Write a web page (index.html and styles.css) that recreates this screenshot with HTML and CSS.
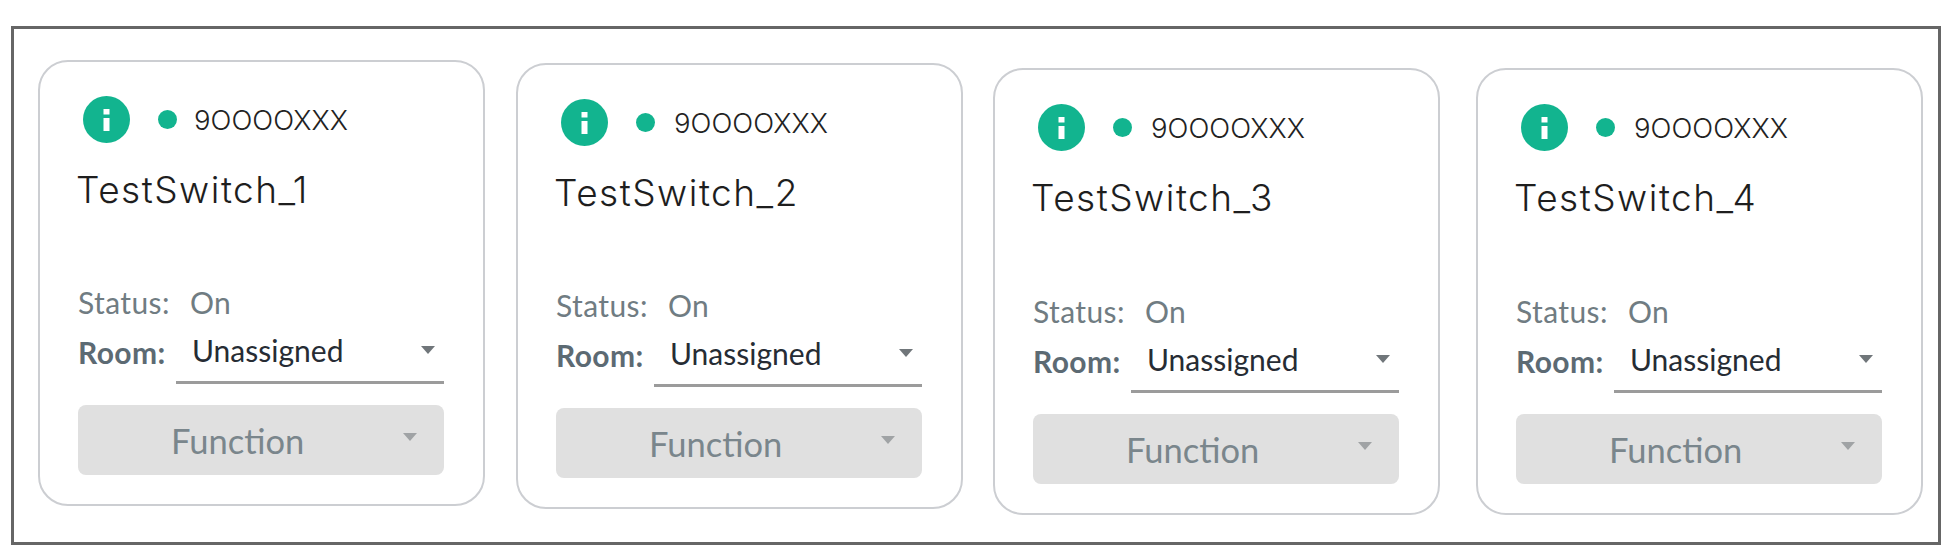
FILE: index.html
```html
<!DOCTYPE html>
<html>
  <head>
    <title>Switches</title>
    <link rel="stylesheet" href="styles.css">
  </head>
  <body>
    <div class="frame">
      <!-- switch 1 -->
      <div class="card card_1">
        <div class="card_top">
          <svg class="info_icon" viewBox="0 0 47 47"><circle cx="23.5" cy="23.5" r="23.5" fill="#12b48f"/><rect x="20.5" y="13" width="6" height="5.5" fill="#fff"/><rect x="20.5" y="22" width="6" height="13" fill="#fff"/></svg>
          <span class="dot"></span>
          <span class="serial">9OOOOXXX</span>
        </div>
        <div class="title">TestSwitch_1</div>
        <div class="status"><span class="status_label">Status:</span><span>On</span></div>
        <div class="room">
          <span class="room_label">Room:</span>
          <div class="room_select"><span>Unassigned</span><span class="arrow"></span></div>
        </div>
        <div class="function"><span class="function_text">Function</span><span class="arrow arrow_light"></span></div>
      </div>
      <!-- switch 2 -->
      <div class="card card_2">
        <div class="card_top">
          <svg class="info_icon" viewBox="0 0 47 47"><circle cx="23.5" cy="23.5" r="23.5" fill="#12b48f"/><rect x="20.5" y="13" width="6" height="5.5" fill="#fff"/><rect x="20.5" y="22" width="6" height="13" fill="#fff"/></svg>
          <span class="dot"></span>
          <span class="serial">9OOOOXXX</span>
        </div>
        <div class="title">TestSwitch_2</div>
        <div class="status"><span class="status_label">Status:</span><span>On</span></div>
        <div class="room">
          <span class="room_label">Room:</span>
          <div class="room_select"><span>Unassigned</span><span class="arrow"></span></div>
        </div>
        <div class="function"><span class="function_text">Function</span><span class="arrow arrow_light"></span></div>
      </div>
      <!-- switch 3 -->
      <div class="card card_3">
        <div class="card_top">
          <svg class="info_icon" viewBox="0 0 47 47"><circle cx="23.5" cy="23.5" r="23.5" fill="#12b48f"/><rect x="20.5" y="13" width="6" height="5.5" fill="#fff"/><rect x="20.5" y="22" width="6" height="13" fill="#fff"/></svg>
          <span class="dot"></span>
          <span class="serial">9OOOOXXX</span>
        </div>
        <div class="title">TestSwitch_3</div>
        <div class="status"><span class="status_label">Status:</span><span>On</span></div>
        <div class="room">
          <span class="room_label">Room:</span>
          <div class="room_select"><span>Unassigned</span><span class="arrow"></span></div>
        </div>
        <div class="function"><span class="function_text">Function</span><span class="arrow arrow_light"></span></div>
      </div>
      <!-- switch 4 -->
      <div class="card card_4">
        <div class="card_top">
          <svg class="info_icon" viewBox="0 0 47 47"><circle cx="23.5" cy="23.5" r="23.5" fill="#12b48f"/><rect x="20.5" y="13" width="6" height="5.5" fill="#fff"/><rect x="20.5" y="22" width="6" height="13" fill="#fff"/></svg>
          <span class="dot"></span>
          <span class="serial">9OOOOXXX</span>
        </div>
        <div class="title">TestSwitch_4</div>
        <div class="status"><span class="status_label">Status:</span><span>On</span></div>
        <div class="room">
          <span class="room_label">Room:</span>
          <div class="room_select"><span>Unassigned</span><span class="arrow"></span></div>
        </div>
        <div class="function"><span class="function_text">Function</span><span class="arrow arrow_light"></span></div>
      </div>
    </div>
  </body>
</html>
```

FILE: styles.css
```css
body{
  margin: 0;
  padding: 0;
  background-color: white;
  font-family: Lato, "Noto Sans", sans-serif;
}
.frame{
  display: flex;
  align-items: flex-start;
  box-sizing: border-box;
  width: 1930px;
  height: 519px;
  margin-top: 26px;
  margin-left: 11px;
  padding: 31px 0 0 24px;
  border: 3px solid rgb(102, 102, 102);
}
.card{
  display: flex;
  flex-direction: column;
  box-sizing: border-box;
  width: 447px;
  height: 446px;
  padding: 34px 39px 29px 38px;
  border: 2px solid rgb(204, 206, 210);
  border-radius: 30px;
}
.card_2{
  margin-left: 31px;
  margin-top: 3px;
}
.card_3{
  height: 447px;
  margin-left: 30px;
  margin-top: 8px;
}
.card_4{
  height: 447px;
  margin-left: 36px;
  margin-top: 8px;
}
.card_top{
  display: flex;
  align-items: center;
  height: 47px;
  margin-left: 5px;
}
.info_icon{
  width: 47px;
  height: 47px;
}
.dot{
  width: 19px;
  height: 19px;
  margin-left: 28px;
  border-radius: 50%;
  background-color: rgb(18, 180, 143);
}
.serial{
  margin-left: 19px;
  font-family: Inter, sans-serif;
  font-weight: 300;
  font-size: 27.5px;
  color: rgb(34, 34, 34);
}
.card_1 .serial{
  margin-left: 17px;
}
.title{
  margin-top: 27px;
  margin-left: -2px;
  font-family: Inter, sans-serif;
  font-weight: 300;
  font-size: 37px;
  letter-spacing: 1.5px;
  line-height: 40px;
  color: rgb(30, 30, 30);
}
.status{
  display: flex;
  margin-top: auto;
  font-size: 30px;
  letter-spacing: 0.4px;
  line-height: 32px;
  color: rgb(112, 124, 130);
}
.status_label{
  width: 112px;
}
.room{
  display: flex;
  align-items: flex-start;
  font-size: 30px;
  margin-top: 13px;
}
.room_label{
  width: 98px;
  padding-top: 3px;
  font-weight: bold;
  letter-spacing: 0.4px;
  color: rgb(92, 106, 115);
}
.room_select{
  display: flex;
  flex: 1;
  justify-content: space-between;
  align-items: center;
  height: 38px;
  padding: 0 9px 12px 16px;
  border-bottom: 3px solid rgb(155, 155, 155);
  color: rgb(38, 44, 52);
}
.arrow{
  width: 0;
  height: 0;
  border-left: 7px solid transparent;
  border-right: 7px solid transparent;
  border-top: 8px solid rgb(112, 118, 122);
}
.function{
  display: flex;
  align-items: center;
  box-sizing: border-box;
  height: 70px;
  margin-top: 21px;
  padding-left: 93px;
  border-radius: 8px;
  background-color: rgb(224, 224, 224);
  font-size: 34.5px;
  color: rgb(122, 134, 140);
}
.function_text{
  width: 232px;
}
.arrow_light{
  border-top-color: rgb(160, 163, 165);
  margin-bottom: 6px;
}
```
